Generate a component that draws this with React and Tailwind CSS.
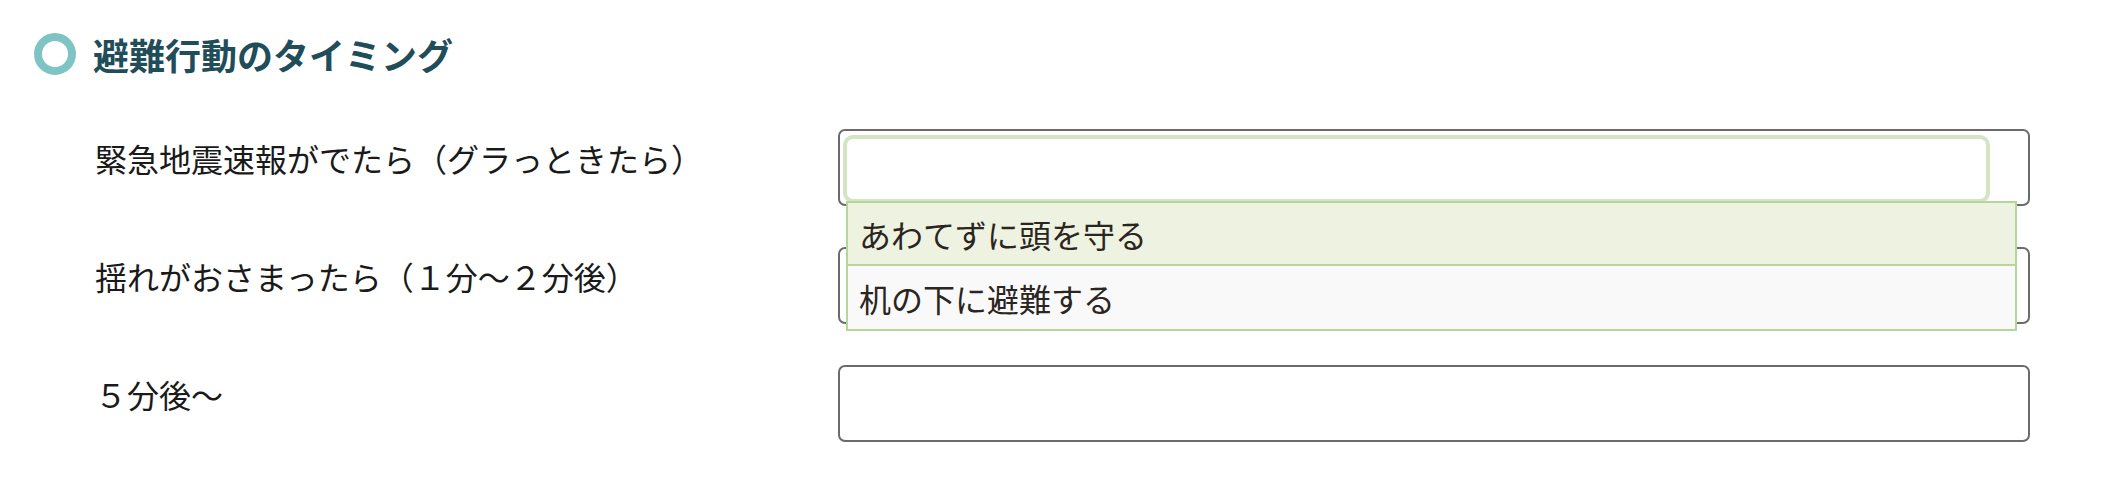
const rows = [
  { id: 1, label: "緊急地震速報がでたら（グラっときたら）", open: true },
  { id: 2, label: "揺れがおさまったら（１分～２分後）", open: false },
  { id: 3, label: "５分後～", open: false },
];

const options = ["あわてずに頭を守る", "机の下に避難する"];

const App = () => {
  return (
    <div
      className="w-full h-[493px] bg-white overflow-hidden"
      style={{ fontFamily: '"Noto Sans CJK JP", "Noto Sans", sans-serif' }}
    >
      {/* Heading */}
      <div className="flex items-center pt-[33px] pl-[34px]">
        <span className="w-[42px] h-[42px] rounded-full border-[8px] border-[#7fc4c4]" />
        <h2 className="ml-[17px] text-[36px] leading-[42px] font-bold text-[#1f4d59]">
          避難行動のタイミング
        </h2>
      </div>

      {/* Timing rows */}
      <div className="flex flex-col gap-[41px] mt-[54px]">
        {rows.map((r) => (
          <div key={r.id} className="flex items-start">
            <div className="w-[838px] pl-[95px] pt-[6px] text-[32px] leading-[46px] text-[#1a1a1a]">
              {r.label}
            </div>

            <div className="relative w-[1192px] h-[77px] rounded-[7px] border-2 border-[#6b6b6b] bg-white">
              {r.open && (
                <>
                  <div className="mt-[4px] ml-[3px] w-[1147px] h-[68px] rounded-[10px] border-[4px] border-[#d4e5c4] bg-white" />

                  {/* Suggestion list */}
                  <ul className="absolute z-10 left-[6px] top-[70px] w-[1171px] border-2 border-[#b6d59d] text-[32px] text-[#2b2522]">
                    {options.map((o, i) => (
                      <li
                        key={o}
                        className={`h-[63px] flex items-center pl-[11px] ${
                          i === 0
                            ? "bg-[#eef2e0] border-b-2 border-[#b6d59d]"
                            : "bg-[#f9f9f9]"
                        }`}
                      >
                        {o}
                      </li>
                    ))}
                  </ul>
                </>
              )}
            </div>
          </div>
        ))}
      </div>
    </div>
  );
};

export default App;
